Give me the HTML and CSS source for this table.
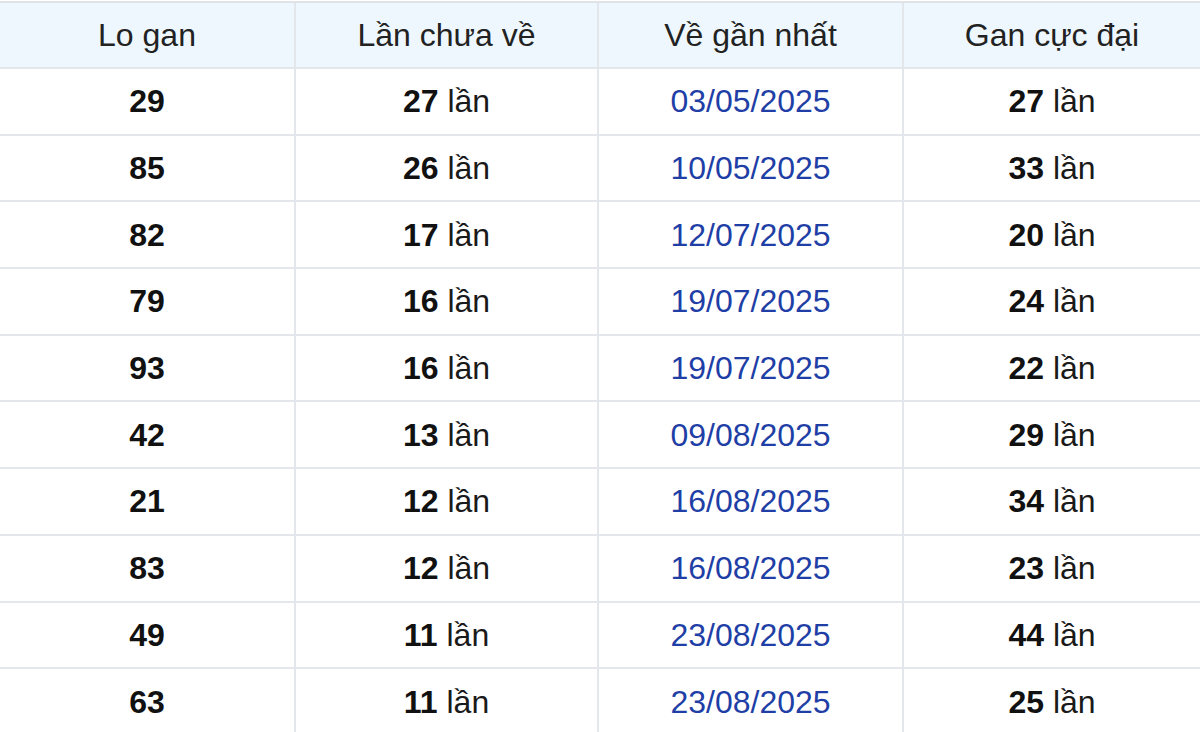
FILE: index.html
```html
<!DOCTYPE html>
<html lang="vi">
<head>
<meta charset="utf-8">
<title>Lo gan</title>
<link rel="stylesheet" href="styles.css">
</head>
<body>
<div class="table">
  <div class="cell head">Lo gan</div>
  <div class="cell head">Lần chưa về</div>
  <div class="cell head">Về gần nhất</div>
  <div class="cell head last">Gan cực đại</div>

  <div class="cell num">29</div><div class="cell"><b>27</b>&nbsp;lần</div><div class="cell date">03/05/2025</div><div class="cell last"><b>27</b>&nbsp;lần</div>
  <div class="cell num">85</div><div class="cell"><b>26</b>&nbsp;lần</div><div class="cell date">10/05/2025</div><div class="cell last"><b>33</b>&nbsp;lần</div>
  <div class="cell num">82</div><div class="cell"><b>17</b>&nbsp;lần</div><div class="cell date">12/07/2025</div><div class="cell last"><b>20</b>&nbsp;lần</div>
  <div class="cell num">79</div><div class="cell"><b>16</b>&nbsp;lần</div><div class="cell date">19/07/2025</div><div class="cell last"><b>24</b>&nbsp;lần</div>
  <div class="cell num">93</div><div class="cell"><b>16</b>&nbsp;lần</div><div class="cell date">19/07/2025</div><div class="cell last"><b>22</b>&nbsp;lần</div>
  <div class="cell num">42</div><div class="cell"><b>13</b>&nbsp;lần</div><div class="cell date">09/08/2025</div><div class="cell last"><b>29</b>&nbsp;lần</div>
  <div class="cell num">21</div><div class="cell"><b>12</b>&nbsp;lần</div><div class="cell date">16/08/2025</div><div class="cell last"><b>34</b>&nbsp;lần</div>
  <div class="cell num">83</div><div class="cell"><b>12</b>&nbsp;lần</div><div class="cell date">16/08/2025</div><div class="cell last"><b>23</b>&nbsp;lần</div>
  <div class="cell num">49</div><div class="cell"><b>11</b>&nbsp;lần</div><div class="cell date">23/08/2025</div><div class="cell last"><b>44</b>&nbsp;lần</div>
  <div class="cell num">63</div><div class="cell"><b>11</b>&nbsp;lần</div><div class="cell date">23/08/2025</div><div class="cell last"><b>25</b>&nbsp;lần</div>
</div>
</body>
</html>
```
FILE: styles.css
```css
html, body {
  margin: 0;
  padding: 0;
  background: #ffffff;
}
body {
  font-family: "Liberation Sans", Arial, sans-serif;
  color: #111111;
  overflow: hidden;
}
.table {
  margin-top: 1px;
  border-top: 2px solid #dfe3e8;
  display: grid;
  grid-template-columns: 296px 303px 305px 296px;
  grid-template-rows: 66px repeat(10, 66.7px);
}
.cell {
  display: flex;
  align-items: center;
  justify-content: center;
  padding-top: 1px;
  font-size: 32px;
  border-right: 2px solid #e3e6ea;
  border-bottom: 2px solid #e3e6ea;
  color: #1a1a1a;
}
.cell.last {
  border-right: none;
}
.head {
  background: #eef7fe;
  color: #222222;
  font-weight: normal;
}
.num {
  font-weight: bold;
  color: #111111;
}
.cell b {
  font-weight: bold;
  color: #111111;
}
.date {
  color: #1f3fa6;
}
```
